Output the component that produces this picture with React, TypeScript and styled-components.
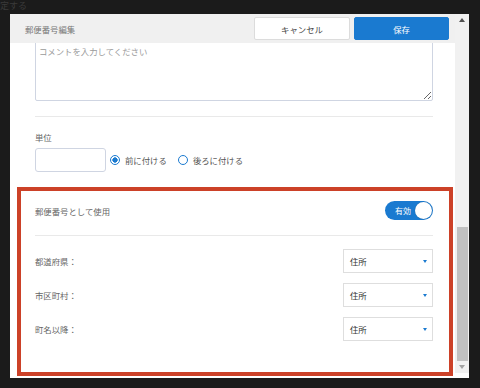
import React from 'react'
import styled, { createGlobalStyle } from 'styled-components'

const BLUE = '#1a7ad0'

const GlobalStyle = createGlobalStyle`
  html, body {
    margin: 0;
    padding: 0;
    background: #1b1b1b;
  }
  body {
    font-family: "Noto Sans CJK JP", "Noto Sans", sans-serif;
  }
  * {
    box-sizing: border-box;
  }
`

const Page = styled.div`
  width: 480px;
  height: 388px;
  overflow: hidden;
  display: flex;
  flex-direction: column;
`

const Behind = styled.div`
  height: 14px;
  line-height: 12px;
  font-size: 9px;
  color: #3a3a3a;
  white-space: nowrap;
`

const Modal = styled.div`
  margin-left: 10px;
  width: 459px;
  height: 364px;
  display: flex;
  background: #fff;
`

const Main = styled.div`
  flex: 1;
  min-width: 0;
  display: flex;
  flex-direction: column;
`

const Header = styled.header`
  height: 29px;
  flex-shrink: 0;
  display: flex;
  align-items: center;
  gap: 4px;
  padding: 0 6px 0 15px;
  background: #f0f0f0;
`

const Title = styled.h1`
  flex: 1;
  margin: 0;
  font-size: 8.4px;
  font-weight: normal;
  color: #777;
`

const Button = styled.button<{ $primary?: boolean }>`
  width: ${p => (p.$primary ? 95 : 96)}px;
  height: 23px;
  padding: 0;
  border-radius: 2px;
  border: 1px solid ${p => (p.$primary ? BLUE : '#dcdcdc')};
  background: ${p => (p.$primary ? BLUE : '#fff')};
  color: ${p => (p.$primary ? '#fff' : '#444')};
  font-family: inherit;
  font-size: 8.4px;
`

// content is bottom aligned so the top of the form is clipped under the header,
// like a form that has been scrolled to its end
const Scroller = styled.div`
  flex: 1;
  min-height: 0;
  overflow: hidden;
  display: flex;
  flex-direction: column;
  justify-content: flex-end;
  padding: 0 22px 2px 25px;
`

const Body = styled.div`
  flex-shrink: 0;
  display: flex;
  flex-direction: column;
`

const FieldLabel = styled.div`
  font-size: 8.4px;
  line-height: 16px;
  color: #666;
  margin-bottom: 3px;
`

const Comment = styled.textarea`
  display: block;
  width: 100%;
  height: 63px;
  padding: 6px 3px;
  border: 1px solid #cfd5e2;
  border-radius: 2px;
  font-family: inherit;
  font-size: 8.4px;
  line-height: 12px;
  color: #333;
  resize: vertical;
  outline: none;

  &::placeholder {
    color: #9a9a9a;
  }
`

const Rule = styled.div<{ $top: number; $bottom: number }>`
  height: 1px;
  background: #e9e9e9;
  margin: ${p => p.$top}px 0 ${p => p.$bottom}px;
`

const UnitRow = styled.div`
  height: 24px;
  display: flex;
  align-items: center;
  margin-bottom: 15px;
`

const UnitInput = styled.input`
  width: 71px;
  height: 24px;
  margin: 0 4px 0 0;
  border: 1px solid #cfd5e2;
  border-radius: 3px;
  font-family: inherit;
  font-size: 8.4px;
`

const RadioOption = styled.label`
  display: flex;
  align-items: center;
  gap: 5px;
  margin-right: 11px;
  font-size: 8.4px;
  color: #555;
`

const Radio = styled.input`
  appearance: none;
  width: 10px;
  height: 10px;
  margin: 0;
  border: 1px solid ${BLUE};
  border-radius: 50%;
  background: #fff;

  &:checked {
    background: radial-gradient(circle, ${BLUE} 0 2.4px, #fff 2.9px);
  }
`

const Section = styled.section`
  margin: 0 -20px 0 -18px;
  padding: 10px 16px 31px 14px;
  border: 4px solid #cc4128;
`

const ToggleRow = styled.div`
  height: 19px;
  display: flex;
  align-items: center;
  justify-content: space-between;
  font-size: 8.4px;
  color: #666;
`

const Toggle = styled.div`
  width: 48px;
  height: 19px;
  border-radius: 10px;
  background: ${BLUE};
  display: flex;
  align-items: center;
  justify-content: flex-end;
  padding-right: 1px;
`

const ToggleText = styled.span`
  font-size: 8px;
  color: #fff;
  margin-right: 4px;
`

const Knob = styled.span`
  width: 17px;
  height: 17px;
  border-radius: 50%;
  background: #fff;
  box-shadow: 0 0 1px rgba(0, 0, 0, 0.3);
`

const FieldRows = styled.div`
  display: flex;
  flex-direction: column;
  gap: 10px;
`

const FieldRow = styled.div`
  height: 24px;
  display: flex;
  align-items: center;
  justify-content: space-between;
  font-size: 8.4px;
  color: #666;
`

const SelectBox = styled.div`
  width: 90px;
  height: 24px;
  display: flex;
  align-items: center;
  justify-content: space-between;
  padding: 0 5px 0 6px;
  border: 1px solid #dedede;
  font-size: 8.4px;
  color: #333;
`

const Caret = styled.span`
  width: 0;
  height: 0;
  border-left: 2.5px solid transparent;
  border-right: 2.5px solid transparent;
  border-top: 3px solid ${BLUE};
`

const ScrollBar = styled.div`
  width: 14px;
  height: 359px;
  align-self: flex-start;
  display: flex;
  flex-direction: column;
  background: #f1f1f1;
`

const ScrollButton = styled.div<{ $down?: boolean }>`
  height: 12px;
  flex-shrink: 0;
  display: flex;
  align-items: center;
  justify-content: center;

  &::before {
    content: '';
    border-left: 3.5px solid transparent;
    border-right: 3.5px solid transparent;
    ${p =>
      p.$down
        ? 'border-top: 4px solid #a3a3a3;'
        : 'border-bottom: 4px solid #505050;'}
  }
`

const Track = styled.div`
  flex: 1;
  display: flex;
  flex-direction: column;
  justify-content: flex-end;
`

const Thumb = styled.div`
  height: 134px;
  margin: 0 1px 0 2px;
  background: #c1c1c1;
`

const addressFields = ['都道府県：', '市区町村：', '町名以降：']

export default function App() {
  return (
    <Page>
      <GlobalStyle />
      <Behind>定する</Behind>
      <Modal>
        <Main>
          <Header>
            <Title>郵便番号編集</Title>
            <Button>キャンセル</Button>
            <Button $primary>保存</Button>
          </Header>

          <Scroller>
            <Body>
              <Comment placeholder="コメントを入力してください" />
              <Rule $top={15} $bottom={12} />

              <FieldLabel>単位</FieldLabel>
              <UnitRow>
                <UnitInput />
                <RadioOption>
                  <Radio type="radio" name="unit" defaultChecked />
                  前に付ける
                </RadioOption>
                <RadioOption>
                  <Radio type="radio" name="unit" />
                  後ろに付ける
                </RadioOption>
              </UnitRow>

              <Section>
                <ToggleRow>
                  郵便番号として使用
                  <Toggle>
                    <ToggleText>有効</ToggleText>
                    <Knob />
                  </Toggle>
                </ToggleRow>
                <Rule $top={15} $bottom={13} />
                <FieldRows>
                  {addressFields.map(label => (
                    <FieldRow key={label}>
                      {label}
                      <SelectBox>
                        住所
                        <Caret />
                      </SelectBox>
                    </FieldRow>
                  ))}
                </FieldRows>
              </Section>
            </Body>
          </Scroller>
        </Main>

        <ScrollBar>
          <ScrollButton />
          <Track>
            <Thumb />
          </Track>
          <ScrollButton $down />
        </ScrollBar>
      </Modal>
    </Page>
  )
}
